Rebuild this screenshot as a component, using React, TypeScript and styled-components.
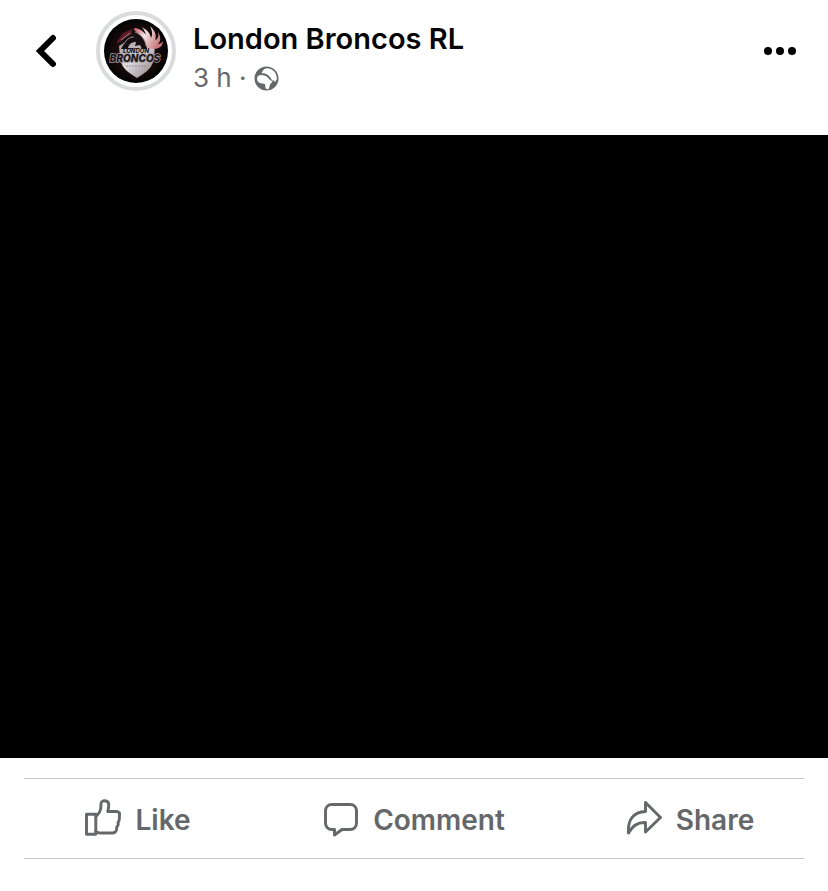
import React from "react";
import styled, { createGlobalStyle } from "styled-components";

const GlobalStyle = createGlobalStyle`
  * { box-sizing: border-box; }
  body {
    margin: 0;
    background: #fff;
    font-family: Inter, "Liberation Sans", sans-serif;
  }
`;

const Post = styled.article`
  display: flex;
  flex-direction: column;
  min-height: 100vh;
  background: #fff;
`;

const Header = styled.header`
  display: flex;
  align-items: flex-start;
  padding: 11px 24px 40px;
`;

const IconButton = styled.button`
  display: flex;
  align-items: center;
  justify-content: center;
  width: 48px;
  height: 80px;
  padding: 0;
  border: 0;
  background: none;
  color: #000;
  cursor: pointer;
`;

const Avatar = styled.a`
  display: flex;
  align-items: center;
  justify-content: center;
  width: 80px;
  height: 80px;
  margin: 0 17px 0 24px;
  border: 4px solid #dadbdd;
  border-radius: 50%;
  background: #fff;
`;

const Byline = styled.div`
  flex: 1;
  min-width: 0;
  padding-top: 10px;
`;

const PageName = styled.h1`
  margin: 0;
  color: #050505;
  font-size: 29px;
  font-weight: 600;
  line-height: 36px;
`;

const Meta = styled.div`
  display: flex;
  align-items: center;
  gap: 7px;
  padding-top: 4px;
  color: #65676b;
  font-size: 26px;
  line-height: 34px;
`;

const Video = styled.div`
  width: 100%;
  aspect-ratio: 828 / 623;
  background: #000;
`;

const Divider = styled.hr`
  height: 1px;
  margin: 0 24px;
  border: 0;
  background: #c6c6c8;
`;

const Footer = styled.footer`
  padding-top: 20px;
`;

const Actions = styled.div`
  display: grid;
  grid-template-columns: repeat(3, 1fr);
`;

const Action = styled.button`
  display: flex;
  align-items: center;
  justify-content: center;
  gap: 14px;
  height: 79px;
  padding: 0;
  border: 0;
  background: none;
  color: #65676b;
  font-family: inherit;
  font-size: 28px;
  font-weight: 600;
  line-height: 36px;
  cursor: pointer;
`;

const ActionLabel = styled.span`
  padding-top: 2px;
`;

const LineIcon = styled.svg`
  width: 36px;
  height: 40px;
  fill: none;
  stroke: currentColor;
  stroke-width: 2.9;
  stroke-linejoin: round;
  stroke-linecap: round;
`;

const Crest = () => (
  <svg width="64" height="64" viewBox="0 0 64 64" role="img" aria-label="London Broncos">
    <defs>
      <linearGradient id="shield" x1="0" y1="0" x2="1" y2="1">
        <stop offset="0" stopColor="#9d8b90" />
        <stop offset="0.45" stopColor="#dedcde" />
        <stop offset="1" stopColor="#8b7a80" />
      </linearGradient>
      <linearGradient id="mane" x1="0" y1="0" x2="1" y2="0.4">
        <stop offset="0" stopColor="#c0474f" />
        <stop offset="0.45" stopColor="#f3e4e4" />
        <stop offset="1" stopColor="#c9777b" />
      </linearGradient>
      <radialGradient id="disc">
        <stop offset="0.5" stopColor="#220c10" />
        <stop offset="1" stopColor="#030303" />
      </radialGradient>
    </defs>
    <circle cx="32" cy="32" r="32" fill="url(#disc)" />
    <path d="M15 26l16-7 20 6-1 14c-1 9-7 14-17 20-10-6-16-11-17-20z" fill="url(#shield)" />
    <path d="M30 9c5 0 9 3 12 7-1-4-3-6-4-8 5 3 8 6 9 11 2-3 1-8-1-12 5 5 7 9 5 14 3-1 4-4 3-8 3 5 3 9 0 12 2 0 4-1 5-3 0 5-4 8-9 8l-9-1C39 19 35 13 30 12z" fill="url(#mane)" />
    <path d="M28 10l-9 4-7 10 3 3 6-4-4 7h26c-1-9-5-14-11-16l-2-4z" fill="#160f12" />
    <path d="M28 10l-9 4-7 10 4-1 6-5 6-3z" fill="#5e1b22" />
    <path d="M24 29c1-4 4-6 8-6l-1 4 5-1 2 4z" fill="#bcb3b6" />
    <path d="M31 13c7 3 10 8 11 14M26 14l-9 7M30 18c-5 0-8 3-10 7" fill="none" stroke="#b5a3a7" strokeWidth="0.8" />
    <text x="32" y="34" fill="#171215" fontFamily="Inter, sans-serif" fontSize="6" fontWeight="800" fontStyle="italic" textAnchor="middle">LONDON</text>
    <text x="31" y="43" fill="#1a1417" stroke="#a39a9e" strokeWidth="1.4" paintOrder="stroke" fontFamily="Inter, sans-serif" fontSize="10" fontWeight="800" fontStyle="italic" textAnchor="middle">BRONCOS</text>
    <path d="M22 47h20" stroke="#8f7c81" strokeWidth="0.8" strokeDasharray="2 1" />
  </svg>
);

const Globe = () => (
  <svg width="25" height="25" viewBox="0 0 25 25" role="img" aria-label="Public">
    <circle cx="12.5" cy="12.5" r="12" fill="#65676b" />
    <path d="M7.500 7.500C8 5 10 2.500 13 2.200c6 0 10.300 5 9.800 11l-1.800 3-1-2-1.500.5-2.500-3.500-2.500-2.500-3-1.200z" fill="#fff" />
    <path d="M3 12.500c0-2.500 2.500-4 5-3.500l4 .8 3 3 2 1.700 1.500 1-2.500 3-1 4c-1 1-3 1-3.500-.5l-.5-4-4-.8c-2.500-.2-4-2-4-4.700z" fill="#fff" />
    <path d="M7 8.300c4-.5 7.500 1.500 9.500 5.200" fill="none" stroke="#65676b" strokeWidth="1.5" />
  </svg>
);

export default function App() {
  return (
    <>
      <GlobalStyle />
      <Post>
        <Header>
          <IconButton type="button" aria-label="Back">
            <svg width="24" height="36" viewBox="0 0 24 36" fill="none" stroke="currentColor" strokeWidth="6" strokeLinecap="round">
              <path d="M17 5L4 18l13 13" strokeLinejoin="miter" />
            </svg>
          </IconButton>
          <Avatar href="#" aria-label="London Broncos RL">
            <Crest />
          </Avatar>
          <Byline>
            <PageName>London Broncos RL</PageName>
            <Meta>
              <span>3 h ·</span>
              <Globe />
            </Meta>
          </Byline>
          <IconButton type="button" aria-label="More options">
            <svg width="32" height="8" viewBox="0 0 32 8" fill="currentColor">
              <circle cx="4" cy="4" r="4" />
              <circle cx="16" cy="4" r="4" />
              <circle cx="28" cy="4" r="4" />
            </svg>
          </IconButton>
        </Header>
        <Video role="img" aria-label="Video" />
        <Footer>
          <Divider />
          <Actions>
            <Action type="button">
              <LineIcon viewBox="0 1 36 40" aria-hidden="true">
                <path d="M1.5 16.2h9.3v20H1.5z" />
                <path d="M11 18.500c2.500-2.500 4.500-5 4.800-8.500l.2-4.500c.2-3.800 7.500-3.800 7.700 1 .1 2.500-.4 4.500-.9 7h8.400c3 0 4 2 3.100 4.500 .4 3 .2 5-1.300 6.500.6 2 .2 3.400-1.300 4.600.3 3.600-1.300 5.900-4.200 5.900H15c-2 0-3-.5-4.200-1.800" />
              </LineIcon>
              <ActionLabel>Like</ActionLabel>
            </Action>
            <Action type="button">
              <LineIcon viewBox="0 1 36 40" aria-hidden="true">
                <path d="M9 6.500h18c4 0 6.500 2.500 6.500 6.500v12c0 4-2.500 6.500-6.500 6.500h-8l-7.500 5.500v-5.500h-2.500c-4 0-6.500-2.500-6.500-6.500v-12c0-4 2.500-6.500 6.500-6.500z" />
              </LineIcon>
              <ActionLabel>Comment</ActionLabel>
            </Action>
            <Action type="button">
              <LineIcon viewBox="0 1 36 40" aria-hidden="true">
                <path d="M19.500 4.500L34.500 19.500 19.500 34v-9.500C11.500 24 6.500 27.500 2.500 35 1.500 21.500 7.500 14 19.500 13.500z" />
              </LineIcon>
              <ActionLabel>Share</ActionLabel>
            </Action>
          </Actions>
          <Divider />
        </Footer>
      </Post>
    </>
  );
}
